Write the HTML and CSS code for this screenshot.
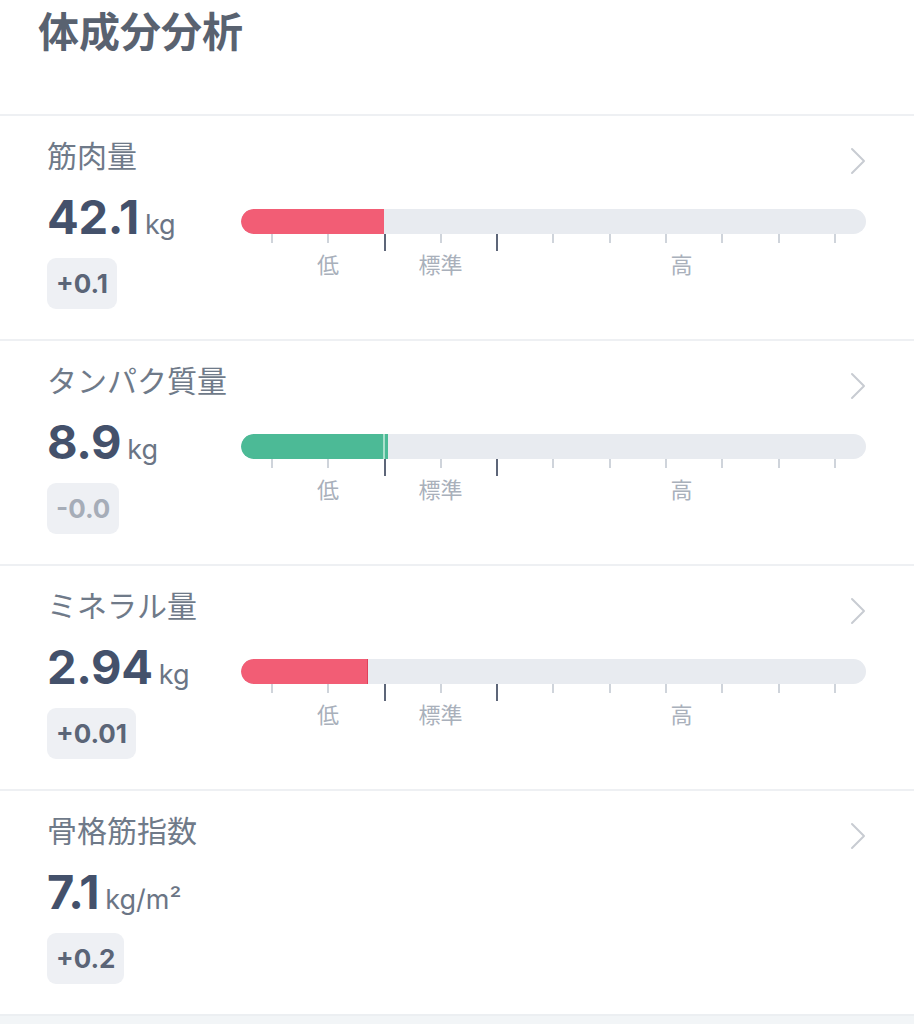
FILE: index.html
```html
<!DOCTYPE html>
<html lang="ja">
<head>
  <meta charset="UTF-8" />
  <meta name="viewport" content="width=device-width, initial-scale=1.0" />
  <title>体成分分析</title>
  <link rel="stylesheet" href="styles.css">
</head>
<body>
  <header class="page-head">
    <h1>体成分分析</h1>
  </header>

  <section class="metric">
    <div class="metric-head">
      <span class="metric-name">筋肉量</span>
      <svg class="chevron" width="16" height="28" viewBox="0 0 16 28"><polyline points="2,2 14,14 2,26" /></svg>
    </div>
    <div class="metric-body">
      <div class="metric-main">
        <div class="metric-value"><span class="num">42.1</span><span class="unit">kg</span></div>
        <span class="delta">+0.1</span>
      </div>
      <div class="scale">
        <div class="bar"><div class="bar-fill red" style="width: 22.9%"></div></div>
        <div class="ticks">
          <i></i><i></i><i class="major"></i><i></i><i class="major"></i><i></i><i></i><i></i><i></i><i></i><i></i>
        </div>
        <div class="scale-labels">
          <span class="low">低</span><span class="mid">標準</span><span class="high">高</span>
        </div>
      </div>
    </div>
  </section>

  <section class="metric">
    <div class="metric-head">
      <span class="metric-name">タンパク質量</span>
      <svg class="chevron" width="16" height="28" viewBox="0 0 16 28"><polyline points="2,2 14,14 2,26" /></svg>
    </div>
    <div class="metric-body">
      <div class="metric-main">
        <div class="metric-value"><span class="num">8.9</span><span class="unit">kg</span></div>
        <span class="delta muted">-0.0</span>
      </div>
      <div class="scale">
        <div class="bar"><div class="bar-fill green" style="width: 23.5%"></div></div>
        <div class="ticks">
          <i></i><i></i><i class="major"></i><i></i><i class="major"></i><i></i><i></i><i></i><i></i><i></i><i></i>
        </div>
        <div class="scale-labels">
          <span class="low">低</span><span class="mid">標準</span><span class="high">高</span>
        </div>
      </div>
    </div>
  </section>

  <section class="metric">
    <div class="metric-head">
      <span class="metric-name">ミネラル量</span>
      <svg class="chevron" width="16" height="28" viewBox="0 0 16 28"><polyline points="2,2 14,14 2,26" /></svg>
    </div>
    <div class="metric-body">
      <div class="metric-main">
        <div class="metric-value"><span class="num">2.94</span><span class="unit">kg</span></div>
        <span class="delta">+0.01</span>
      </div>
      <div class="scale">
        <div class="bar"><div class="bar-fill red edged" style="width: 20.3%"></div></div>
        <div class="ticks">
          <i></i><i></i><i class="major"></i><i></i><i class="major"></i><i></i><i></i><i></i><i></i><i></i><i></i>
        </div>
        <div class="scale-labels">
          <span class="low">低</span><span class="mid">標準</span><span class="high">高</span>
        </div>
      </div>
    </div>
  </section>

  <section class="metric">
    <div class="metric-head">
      <span class="metric-name">骨格筋指数</span>
      <svg class="chevron" width="16" height="28" viewBox="0 0 16 28"><polyline points="2,2 14,14 2,26" /></svg>
    </div>
    <div class="metric-body">
      <div class="metric-main">
        <div class="metric-value"><span class="num">7.1</span><span class="unit">kg/m²</span></div>
        <span class="delta">+0.2</span>
      </div>
    </div>
  </section>

  <footer class="page-foot"></footer>
</body>
</html>
```

FILE: styles.css
```css
:root {
  --line: #eef0f3;
  --title: #596270;
  --label: #6f7a89;
  --value: #44516b;
  --unit: #6b7585;
  --badge-bg: #eef0f4;
  --badge-text: #5b6577;
  --track: #e8ebf0;
  --red: #f25d75;
  --green: #4cba96;
  --tick: #cfd4db;
  --tick-major: #5d6679;
  --scale-text: #a9b0bb;
}
body {
  margin: 0;
  background: #fff;
  font-family: Inter, "Noto Sans CJK JP", sans-serif;
  color: var(--value);
}
.page-head {
  padding: 4px 38px 54px;
}
.page-head h1 {
  margin: 0;
  font-size: 41px;
  line-height: 56px;
  font-weight: 700;
  color: var(--title);
}
.metric {
  border-top: 2px solid var(--line);
  padding: 20px 48px 30px 47px;
}
.metric-head {
  display: flex;
  justify-content: space-between;
  align-items: center;
  height: 40px;
}
.metric-name {
  font-size: 30px;
  line-height: 40px;
  color: var(--label);
}
.chevron {
  margin-top: 10px;
  fill: none;
  stroke: #c8ccd2;
  stroke-width: 2;
  stroke-linecap: round;
  stroke-linejoin: round;
}
.metric-body {
  display: flex;
  margin-top: 13px;
}
.metric-main {
  width: 194px;
  display: flex;
  flex-direction: column;
  align-items: flex-start;
}
.metric-value {
  display: flex;
  align-items: baseline;
  height: 56px;
}
.num {
  font-size: 47px;
  line-height: 56px;
  font-weight: 700;
  letter-spacing: -0.3px;
  color: var(--value);
}
.unit {
  margin-left: 6px;
  font-size: 27px;
  color: var(--unit);
}
.delta {
  margin-top: 13px;
  padding: 8px 9px;
  line-height: 35px;
  font-size: 26px;
  font-weight: 700;
  color: var(--badge-text);
  background: var(--badge-bg);
  border-radius: 9px;
}
.delta.muted {
  color: #a6adb8;
}
.scale {
  flex: 1;
  margin-top: 20px;
}
.bar {
  height: 25px;
  border-radius: 13px;
  background: var(--track);
  overflow: hidden;
}
.bar-fill {
  height: 100%;
  border-radius: 13px 0 0 13px;
}
.bar-fill.red {
  background: var(--red);
}
.bar-fill.edged {
  box-shadow: inset -1px 0 0 #e0405a;
}
.bar-fill.green {
  background: var(--green);
  position: relative;
}
.bar-fill.green::after {
  content: "";
  position: absolute;
  right: 3px;
  top: 0;
  bottom: 0;
  width: 2px;
  background: #a9e0cc;
}
.ticks {
  display: flex;
  justify-content: space-between;
  align-items: flex-start;
  margin: 0 30px;
  height: 17px;
}
.ticks i {
  width: 2px;
  height: 9px;
  background: var(--tick);
}
.ticks i.major {
  height: 17px;
  background: var(--tick-major);
}
.scale-labels {
  display: flex;
  padding-left: 31px;
  font-size: 22px;
  line-height: 28px;
  color: var(--scale-text);
}
.scale-labels span {
  text-align: center;
}
.scale-labels .low {
  width: 112px;
}
.scale-labels .mid {
  width: 113px;
}
.scale-labels .high {
  flex: 1;
}
.page-foot {
  border-top: 2px solid #eceff2;
  background: #f2f5f7;
  height: 40px;
}
```
